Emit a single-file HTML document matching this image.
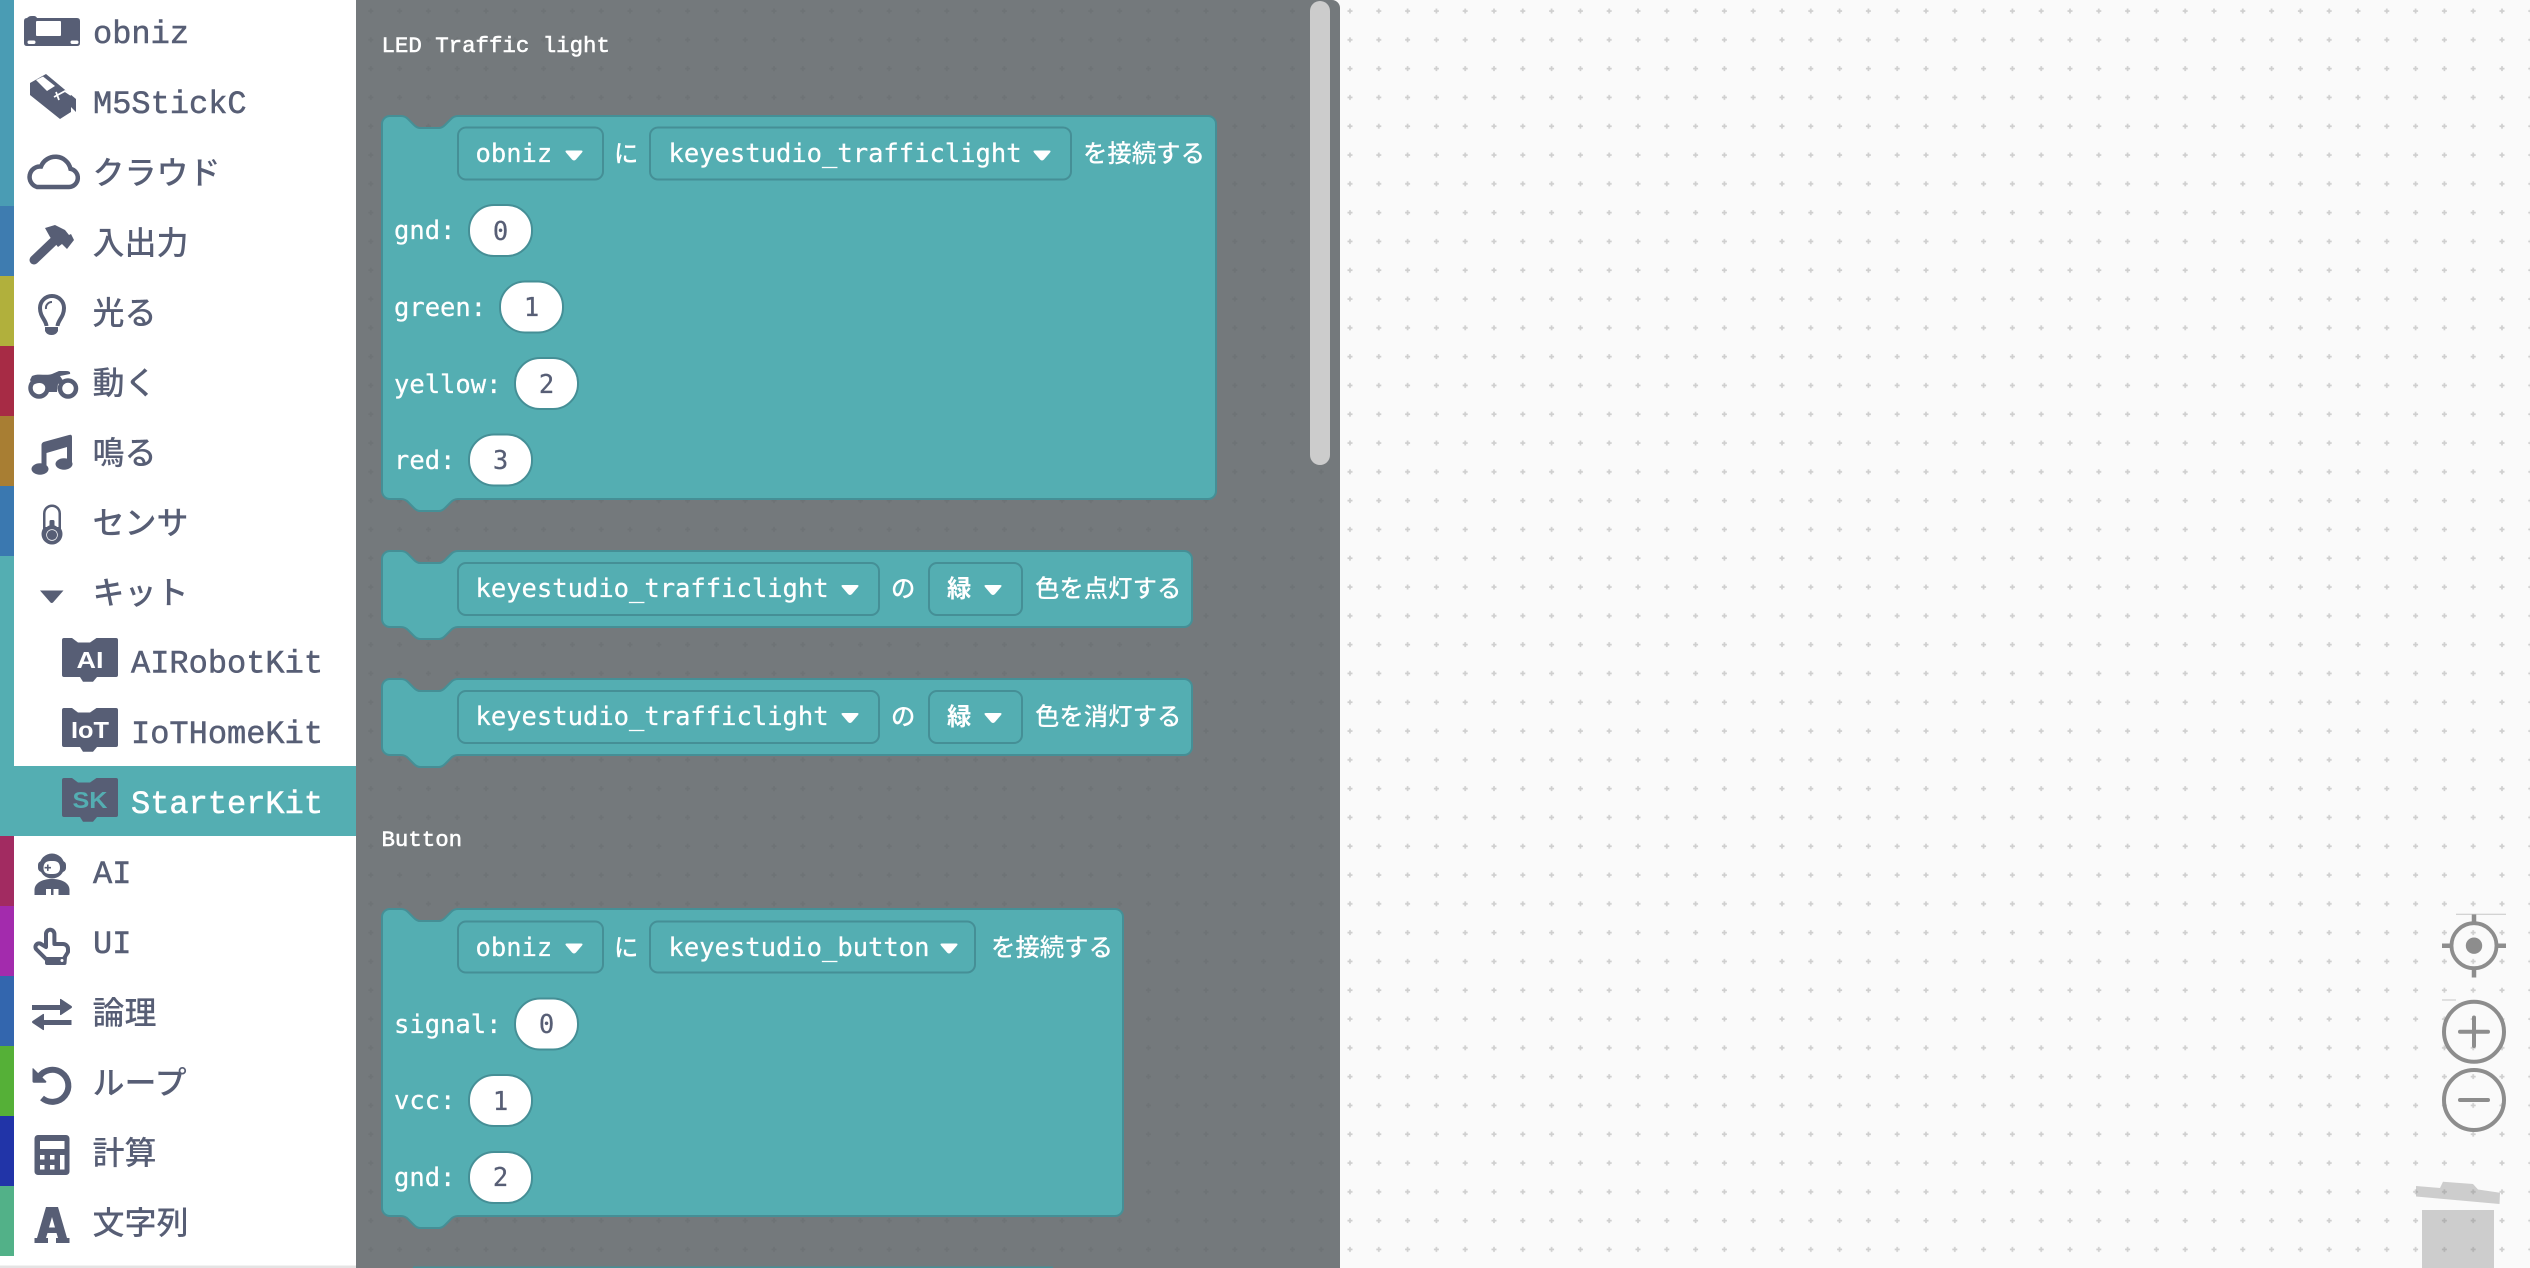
<!DOCTYPE html>
<html lang="ja">
<head>
<meta charset="utf-8">
<title>obniz blocks</title>
<style>
html,body{margin:0;padding:0;width:2530px;height:1268px;overflow:hidden;background:#fafafa}
svg{display:block}
.m{font-family:"Liberation Mono","Noto Sans CJK JP",monospace;font-size:32px;fill:#575e75;stroke:#575e75;stroke-width:.5}
.j{font-family:"Liberation Sans","Noto Sans CJK JP",sans-serif;font-size:32px;font-weight:500;fill:#575e75}
.l{font-family:"Liberation Mono",monospace;font-size:22.4px;fill:#fff;stroke:#fff;stroke-width:.55}
.b{font-family:"DejaVu Sans Mono","Noto Sans CJK JP",monospace;font-size:25.5px;fill:#fff;stroke:#fff;stroke-width:.25}
.c{font-family:"Liberation Sans","Noto Sans CJK JP",sans-serif;font-size:24.4px;font-weight:500;fill:#fff}
.n{font-family:"DejaVu Sans Mono",monospace;font-size:25.5px;fill:#575e75;stroke:#575e75;stroke-width:.25;text-anchor:middle}
.k{font-family:"Liberation Sans",sans-serif;font-weight:700;fill:#fff;text-anchor:middle}
.bk{fill:#54aeb2;stroke:#458f96;stroke-width:2}
.f{fill:#54aeb2;stroke:#458f96;stroke-width:2}
.p{fill:#fff;stroke:#458f96;stroke-width:2}
.ic{fill:#575e75}
.o{fill:none;stroke:#575e75}
</style>
</head>
<body>
<svg xmlns="http://www.w3.org/2000/svg" width="2530" height="1268" viewBox="0 0 2530 1268">
<defs>
<pattern id="dots" x="11.8" y="-3" width="28.8" height="28.8" patternUnits="userSpaceOnUse">
<path d="M13.4 11.5v5M10.9 14h5" stroke="#cfcfcf" stroke-width="1.7" fill="none"/>
</pattern>
<pattern id="dotsd" x="11.8" y="-3" width="28.8" height="28.8" patternUnits="userSpaceOnUse">
<path d="M13.4 11.5v5M10.9 14h5" stroke="#000" stroke-opacity=".05" stroke-width="1.7" fill="none"/>
</pattern>
<path id="arr" d="M1 0h14q2.500 0 1 2l-6 7q-2 2-4 0L0 2Q-1.500 0 1 0z" fill="#fff"/>
</defs>

<!-- workspace -->
<rect width="2530" height="1268" fill="#fafafa"/>
<rect width="2530" height="1268" fill="url(#dots)"/>

<!-- flyout -->
<path d="M356 0H1332a8 8 0 0 1 8 8V1268H356Z" fill="#74797c"/>
<path d="M356 0H1332a8 8 0 0 1 8 8V1268H356Z" fill="url(#dotsd)"/>
<rect x="1310" y="1" width="20" height="464" rx="10" fill="#cccccc"/>

<text class="l" x="381.500" y="52">LED Traffic light</text>

<!-- Block 1 -->
<path class="bk" d="M382 124a8 8 0 0 1 8-8H401c3 0 5 1 7 3l6 6c2 2 3.500 3 6 3h19c2.500 0 4-1 6-3l6-6c2-2 4-3 7-3H1208a8 8 0 0 1 8 8V491a8 8 0 0 1-8 8H458c-3 0-5 1-7 3l-6 6c-2 2-3.500 3-6 3H420c-2.500 0-4-1-6-3l-6-6c-2-2-4-3-7-3H390a8 8 0 0 1-8-8Z"/>
<rect class="f" x="458" y="127.500" width="145" height="52" rx="8"/>
<text class="b" x="475.500" y="162">obniz</text>
<use href="#arr" x="566" y="150.500"/>
<text class="c" x="614" y="162">に</text>
<rect class="f" x="650" y="127.500" width="421" height="52" rx="8"/>
<text class="b" x="668.500" y="162">keyestudio_trafficlight</text>
<use href="#arr" x="1034" y="150.500"/>
<text class="c" x="1083" y="162">を接続する</text>
<text class="b" x="394" y="239">gnd:</text>
<rect class="p" x="469" y="205" width="63" height="51" rx="25"/>
<text class="n" x="500.500" y="240">0</text>
<text class="b" x="394" y="316">green:</text>
<rect class="p" x="500" y="281.500" width="63" height="51" rx="25"/>
<text class="n" x="531.500" y="316">1</text>
<text class="b" x="394" y="393">yellow:</text>
<rect class="p" x="515" y="358" width="63" height="51" rx="25"/>
<text class="n" x="546.500" y="393">2</text>
<text class="b" x="394" y="469">red:</text>
<rect class="p" x="469" y="434.500" width="63" height="51" rx="25"/>
<text class="n" x="500.500" y="469">3</text>

<!-- Block 2 -->
<path class="bk" d="M382 559a8 8 0 0 1 8-8H401c3 0 5 1 7 3l6 6c2 2 3.500 3 6 3h19c2.500 0 4-1 6-3l6-6c2-2 4-3 7-3H1184a8 8 0 0 1 8 8V619a8 8 0 0 1-8 8H458c-3 0-5 1-7 3l-6 6c-2 2-3.500 3-6 3H420c-2.500 0-4-1-6-3l-6-6c-2-2-4-3-7-3H390a8 8 0 0 1-8-8Z"/>
<rect class="f" x="458" y="563" width="421" height="52" rx="8"/>
<text class="b" x="475.500" y="597">keyestudio_trafficlight</text>
<use href="#arr" x="842" y="585"/>
<text class="c" x="891" y="597">の</text>
<rect class="f" x="929" y="563" width="93" height="52" rx="8"/>
<text class="c" x="947" y="597" style="font-weight:700">緑</text>
<use href="#arr" x="985" y="585"/>
<text class="c" x="1035" y="597">色を点灯する</text>

<!-- Block 3 -->
<path class="bk" d="M382 687a8 8 0 0 1 8-8H401c3 0 5 1 7 3l6 6c2 2 3.500 3 6 3h19c2.500 0 4-1 6-3l6-6c2-2 4-3 7-3H1184a8 8 0 0 1 8 8V747a8 8 0 0 1-8 8H458c-3 0-5 1-7 3l-6 6c-2 2-3.500 3-6 3H420c-2.500 0-4-1-6-3l-6-6c-2-2-4-3-7-3H390a8 8 0 0 1-8-8Z"/>
<rect class="f" x="458" y="691" width="421" height="52" rx="8"/>
<text class="b" x="475.500" y="725">keyestudio_trafficlight</text>
<use href="#arr" x="842" y="713"/>
<text class="c" x="891" y="725">の</text>
<rect class="f" x="929" y="691" width="93" height="52" rx="8"/>
<text class="c" x="947" y="725" style="font-weight:700">緑</text>
<use href="#arr" x="985" y="713"/>
<text class="c" x="1035" y="725">色を消灯する</text>

<text class="l" x="381.500" y="846">Button</text>

<!-- Block 4 -->
<path class="bk" d="M382 917a8 8 0 0 1 8-8H401c3 0 5 1 7 3l6 6c2 2 3.500 3 6 3h19c2.500 0 4-1 6-3l6-6c2-2 4-3 7-3H1115a8 8 0 0 1 8 8V1208a8 8 0 0 1-8 8H458c-3 0-5 1-7 3l-6 6c-2 2-3.500 3-6 3H420c-2.500 0-4-1-6-3l-6-6c-2-2-4-3-7-3H390a8 8 0 0 1-8-8Z"/>
<rect class="f" x="458" y="921.500" width="145" height="51" rx="8"/>
<text class="b" x="475.500" y="956">obniz</text>
<use href="#arr" x="566" y="943.500"/>
<text class="c" x="614" y="956">に</text>
<rect class="f" x="650" y="921.500" width="325" height="51" rx="8"/>
<text class="b" x="668.500" y="956">keyestudio_button</text>
<use href="#arr" x="941" y="943.500"/>
<text class="c" x="991" y="956">を接続する</text>
<text class="b" x="394" y="1033">signal:</text>
<rect class="p" x="515" y="998.500" width="63" height="51" rx="25"/>
<text class="n" x="546.500" y="1033">0</text>
<text class="b" x="394" y="1109">vcc:</text>
<rect class="p" x="469" y="1075" width="63" height="51" rx="25"/>
<text class="n" x="500.500" y="1110">1</text>
<text class="b" x="394" y="1186">gnd:</text>
<rect class="p" x="469" y="1152" width="63" height="51" rx="25"/>
<text class="n" x="500.500" y="1186">2</text>
<rect x="413" y="1266.500" width="640" height="1.500" fill="#458f96"/>

<!-- Sidebar -->
<rect x="0" y="0" width="356" height="1268" fill="#fff"/>
<rect x="0" y="1265.500" width="356" height="2.500" fill="#e4e4e4"/>
<rect x="0" y="0" width="14" height="206" fill="#4a9cb4"/>
<rect x="0" y="206" width="14" height="70" fill="#3e7cb0"/>
<rect x="0" y="276" width="14" height="70" fill="#b1b03c"/>
<rect x="0" y="346" width="14" height="70" fill="#a72b45"/>
<rect x="0" y="416" width="14" height="70" fill="#a87e33"/>
<rect x="0" y="486" width="14" height="70" fill="#3a78b0"/>
<rect x="0" y="556" width="14" height="280" fill="#54aeb2"/>
<rect x="0" y="766" width="356" height="70" fill="#54aeb2"/>
<rect x="0" y="836" width="14" height="70" fill="#a22b61"/>
<rect x="0" y="906" width="14" height="70" fill="#a32bad"/>
<rect x="0" y="976" width="14" height="70" fill="#3366ae"/>
<rect x="0" y="1046" width="14" height="70" fill="#55b037"/>
<rect x="0" y="1116" width="14" height="70" fill="#2134a8"/>
<rect x="0" y="1186" width="14" height="70" fill="#52b188"/>

<!-- sidebar labels -->
<text class="m" x="93" y="43">obniz</text>
<text class="m" x="93" y="113">M5StickC</text>
<text class="j" x="92.500" y="184">クラウド</text>
<text class="j" x="92.500" y="254">入出力</text>
<text class="j" x="92.500" y="324">光る</text>
<text class="j" x="92.500" y="394">動く</text>
<text class="j" x="92.500" y="464">鳴る</text>
<text class="j" x="92.500" y="534">センサ</text>
<text class="j" x="92.500" y="604">キット</text>
<text class="m" x="131" y="672.500">AIRobotKit</text>
<text class="m" x="131" y="743">IoTHomeKit</text>
<text class="m" x="131" y="813" style="fill:#fff;stroke:#fff">StarterKit</text>
<text class="m" x="93" y="883">AI</text>
<text class="m" x="93" y="953">UI</text>
<text class="j" x="92.500" y="1024">論理</text>
<text class="j" x="92.500" y="1094">ループ</text>
<text class="j" x="92.500" y="1164">計算</text>
<text class="j" x="92.500" y="1234">文字列</text>

<!-- obniz icon -->
<path class="ic" d="M24 21q0-3 3-3V18l2-1.500q1-.5 3-.5h2q2 0 3 2H77q3 0 3 3V43q0 3-3 3H27q-3 0-3-3Z"/>
<rect x="36" y="21" width="25" height="15" rx="1" fill="#fff"/>
<rect x="27.500" y="40.500" width="8" height="3.500" rx="1.700" fill="#fff"/>
<rect x="70.500" y="40.500" width="8" height="3.500" rx="1.700" fill="#fff"/>

<!-- M5 icon -->
<path class="ic" d="M46 74 76 99V112L71 107V112L60 119 30 95V83Z"/>
<path d="M36 80 43 76.500 55 86 47 91Z" fill="#fff"/>
<path d="M54 97 65 91 71 95" fill="none" stroke="#fff" stroke-width="1.800"/>
<path d="M56 92 59 100" fill="none" stroke="#fff" stroke-width="1.800"/>

<!-- cloud -->
<path class="o" stroke-width="4.500" d="M37 187H69A9.200 9.200 0 0 0 70.500 168.800 15.500 15.500 0 0 0 41 166.500 10.500 10.500 0 0 0 37 187Z"/>

<!-- hammer -->
<path class="o" stroke-width="9" stroke-linecap="round" d="M34 260 56 239"/>
<path class="ic" d="M45 228 55 225 65 230 69 235 71 234 74 240 67 249 62 244 58 247 50 237Z"/>

<!-- bulb -->
<path class="o" stroke-width="4" d="M46.500 326C46 320 40 317 40 308A12 12 0 0 1 64 308C64 317 58 320 57.500 326"/>
<path class="o" stroke-width="2" d="M46 309A6 6 0 0 1 52 302"/>
<path class="ic" d="M45 327H58V331Q56 335 52 335H51Q47 335 45 331Z"/>

<!-- motorbike -->
<circle class="o" stroke-width="4.500" cx="39" cy="388" r="8.500"/>
<circle class="o" stroke-width="4.500" cx="68" cy="388.500" r="8"/>
<path class="ic" d="M32 376C38 373 46 376 52 374L59 371H66Q71 371 70 374L60 376 64 382 58 384 57 392H47C46 383 40 381 33 385L30 380Z"/>

<!-- music -->
<path class="ic" d="M41.500 445q0-2 2-3L69 435q3-1 3 2V464H67V447L46.500 453V469H41.500Z"/>
<ellipse class="ic" cx="40" cy="469" rx="8.500" ry="5.700"/>
<ellipse class="ic" cx="64" cy="464" rx="8.500" ry="5.700"/>

<!-- thermometer -->
<path class="ic" d="M43 513.500a9 9 0 0 1 18 0V530H43Z"/>
<circle class="ic" cx="52" cy="534" r="10.500"/>
<path d="M45.500 513.500a6.500 6.500 0 0 1 13 0V527H45.500Z" fill="#fff"/>
<rect class="ic" x="49.500" y="520" width="5" height="12" rx="1.500"/>
<circle class="ic" cx="52" cy="533" r="8"/>
<circle cx="52" cy="535" r="5.400" fill="none" stroke="#fff" stroke-width=".7"/>

<!-- triangle -->
<path class="ic" d="M40 590.500H63.500L53 602.500q-1.300 1-2.500 0Z"/>

<!-- Kit icons -->
<path class="ic" d="M62 640q0-2 2-2h8l6 4.500h12l6.500-4.500H116q2 0 2 2V675q0 2-2 2H97l-4 4.700H83l-3-4.700H64q-2 0-2-2Z"/>
<text class="k" x="90" y="668" font-size="23" textLength="27" lengthAdjust="spacingAndGlyphs">AI</text>
<path class="ic" d="M62 710q0-2 2-2h8l6 4.500h12l6.500-4.500H116q2 0 2 2V745q0 2-2 2H97l-4 4.700H83l-3-4.700H64q-2 0-2-2Z"/>
<text class="k" x="90" y="738" font-size="23" textLength="38" lengthAdjust="spacingAndGlyphs">IoT</text>
<path class="ic" d="M62 780q0-2 2-2h8l6 4.500h12l6.500-4.500H116q2 0 2 2V815q0 2-2 2H97l-4 4.700H83l-3-4.700H64q-2 0-2-2Z"/>
<text class="k" x="90" y="808" font-size="23" textLength="35" lengthAdjust="spacingAndGlyphs" style="fill:#54aeb2">SK</text>

<!-- robot -->
<circle class="ic" cx="52" cy="866" r="12.500"/>
<rect x="38" y="861" width="28" height="11" rx="4" class="ic"/>
<path d="M43.500 868q0-7 7-7h3q6.500 0 6.500 7 0 6-7 6h-3q-6.500 0-6.500-6Z" fill="#fff"/>
<path class="ic" d="M47 864.500h1.600v2.400h2.400v1.600h-2.400v2.400H47v-2.400h-2.400v-1.600H47Z"/>
<path class="ic" d="M34.500 895V890C34.500 883 42 879 52 879S69.500 883 69.500 890V895Z"/>
<path d="M46 889H51V895H46ZM53.500 889H58.500V895H53.500Z" fill="#fff"/>

<!-- hand -->
<path d="M46 934a4.200 4.200 0 0 1 8.400 0V944H63a5 5 0 0 1 5 5V952L63 960H47L36.500 949.500a3.600 3.600 0 0 1 5.100-5.100L46 947Z" fill="#fff" stroke="#575e75" stroke-width="4" stroke-linejoin="round"/>
<path class="ic" d="M45 957H67L66.500 963q0 2-2 2H47q-2 0-2-2Z"/>
<circle cx="62" cy="960.500" r="1.500" fill="#fff"/>

<!-- arrows -->
<path class="ic" d="M32 1005H60V999.500q0-1 1-.5L71.500 1006q1 1 0 2L61 1015q-1 .5-1-.5V1010H32Z"/>
<path class="ic" d="M71.500 1020H44V1014.500q0-1-1-.5L32.500 1021q-1 1 0 2L43 1030q1 .5 1-.5V1025H71.500Z"/>

<!-- loop -->
<path class="o" stroke-width="6" d="M39 1077A16 16 0 1 1 42 1098"/>
<path class="ic" d="M32.500 1069q0-1.500 1-.5L46 1081q1 1-.5 1.800H34q-1.500 0-1.500-1.500Z"/>

<!-- calculator -->
<rect class="ic" x="34.500" y="1135" width="35" height="40" rx="3.500"/>
<rect x="40" y="1141" width="24.500" height="8" fill="#fff"/>
<rect x="40" y="1155" width="4.500" height="4.500" fill="#fff"/>
<rect x="50" y="1155" width="4.500" height="4.500" fill="#fff"/>
<rect x="60" y="1155" width="4.500" height="14.500" fill="#fff"/>
<rect x="40" y="1165" width="4.500" height="4.500" fill="#fff"/>
<rect x="50" y="1165" width="4.500" height="4.500" fill="#fff"/>

<!-- A -->
<path class="ic" fill-rule="evenodd" d="M46 1207H58L67 1238H69.500V1243H56V1238H58L56.500 1233H47.500L46 1238H48V1243H34.500V1238H37ZM52 1217 49 1227.500H55Z"/>

<!-- Controls -->
<g opacity=".95">
<path d="M2456 914.300H2506" stroke="#c4c4c4" stroke-width="1"/>
<path d="M2442 1000H2456" stroke="#c4c4c4" stroke-width="1"/>
<circle cx="2474" cy="945.700" r="22.500" fill="none" stroke="#888" stroke-width="3.800"/>
<circle cx="2474" cy="945.700" r="8.200" fill="#888"/>
<path d="M2474 914.500V922.500M2474 969V977.500M2442 945.700H2450.500M2497.500 945.700H2506" stroke="#888" stroke-width="4.500"/>
<circle cx="2474" cy="1031.700" r="30" fill="none" stroke="#888" stroke-width="4"/>
<path d="M2460 1031.700H2488M2474 1017.500V1046" stroke="#888" stroke-width="4" stroke-linecap="round"/>
<circle cx="2474" cy="1100" r="30" fill="none" stroke="#888" stroke-width="4"/>
<path d="M2460 1100H2488" stroke="#888" stroke-width="4" stroke-linecap="round"/>
</g>
<path d="M2416 1186 2440 1188 2443 1181.700 2473 1184 2478 1189.500 2500 1192.700 2499.500 1204 2416 1196.500Z" fill="#8a8a8a" opacity=".4"/>
<rect x="2422" y="1210" width="72" height="58" fill="#8a8a8a" opacity=".4"/>
</svg>
</body>
</html>
